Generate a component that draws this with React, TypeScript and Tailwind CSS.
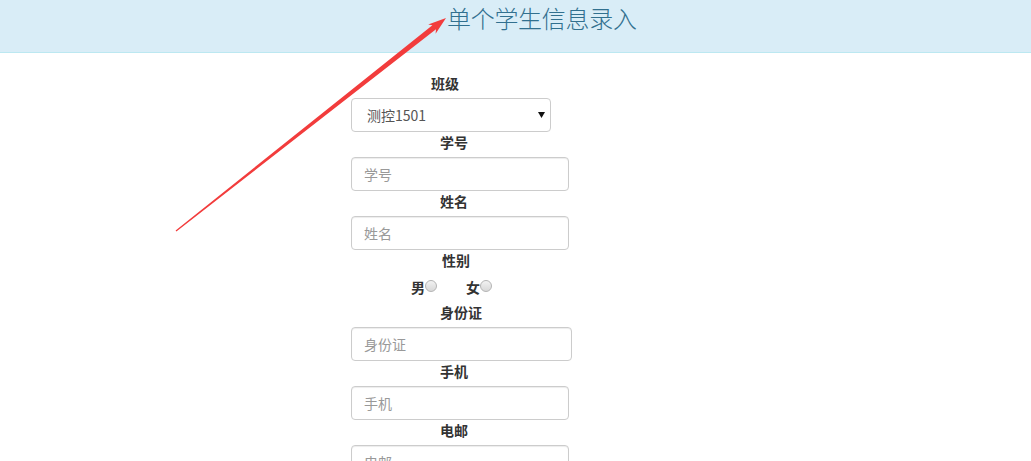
import React from "react";

const font = { fontFamily: '"Noto Sans CJK SC", "Noto Sans", sans-serif' };

function Label({ text, ml }: { text: string; ml: string }) {
  return (
    <div className={`h-[20px] leading-[20px] mb-[5px] text-[14px] font-bold text-[#333] ${ml}`}>{text}</div>
  );
}

function TextInput({ ph, w }: { ph: string; w: string }) {
  return (
    <input
      placeholder={ph}
      className={`block h-[34px] ${w} rounded-[4px] border border-[#ccc] bg-white pl-[12px] text-[14px] text-[#555] placeholder:text-[#999] outline-none shadow-[inset_0_1px_1px_rgba(0,0,0,0.075)]`}
    />
  );
}

function Radio({ label, ml }: { label: string; ml: string }) {
  return (
    <label className={`flex items-center ${ml}`}>
      <span className="text-[14px] font-bold text-[#333] leading-[20px]">{label}</span>
      <input
        type="radio"
        name="sex"
        className="appearance-none w-[12px] h-[12px] rounded-full border border-[#b4b4b4] bg-[linear-gradient(#f2f2f2,#d8d8d8)] mt-[-2px]"
      />
    </label>
  );
}

export default function App() {
  return (
    <div className="relative w-[1031px] h-[461px] overflow-hidden bg-white" style={font}>
      <div className="h-[53px] bg-[#d9edf7] border-b border-[#bce8f1] pl-[447px]">
        <div className="text-[24px] leading-[36px] text-[#31708f] font-light tracking-[-0.3px]">单个学生信息录入</div>
      </div>

      <div className="pl-[351px] pt-[20px] flex flex-col">
        <Label text="班级" ml="ml-[80px]" />
        <div className="relative w-[200px] h-[34px]">
          <select className="appearance-none w-[200px] h-[34px] rounded-[4px] border border-[#ccc] bg-white pl-[15px] text-[14px] text-[#555] outline-none">
            <option>测控1501</option>
          </select>
          <svg className="absolute left-[187px] top-[14px] pointer-events-none" width="8" height="6" viewBox="0 0 8 6">
            <polygon points="0,0 7,0 3.5,6" fill="#111" />
          </svg>
        </div>

        <Label text="学号" ml="ml-[89px]" />
        <TextInput ph="学号" w="w-[218px]" />

        <Label text="姓名" ml="ml-[89px]" />
        <TextInput ph="姓名" w="w-[218px]" />

        <Label text="性别" ml="ml-[91px]" />
        <div className="flex h-[27px] items-center pb-[4px]">
          <Radio label="男" ml="ml-[60px]" />
          <Radio label="女" ml="ml-[29px]" />
        </div>

        <Label text="身份证" ml="ml-[89px]" />
        <TextInput ph="身份证" w="w-[221px]" />

        <Label text="手机" ml="ml-[89px]" />
        <TextInput ph="手机" w="w-[218px]" />

        <Label text="电邮" ml="ml-[89px]" />
        <TextInput ph="电邮" w="w-[218px]" />
      </div>

      <svg className="absolute left-0 top-0 pointer-events-none" width="1031" height="461">
        <polygon
          points="176.4,231.5 436,29.3 435.6,33.8 446,18 428.2,24.4 432.4,25.3 175.6,230.5"
          fill="#f23c3c"
        />
      </svg>
    </div>
  );
}
